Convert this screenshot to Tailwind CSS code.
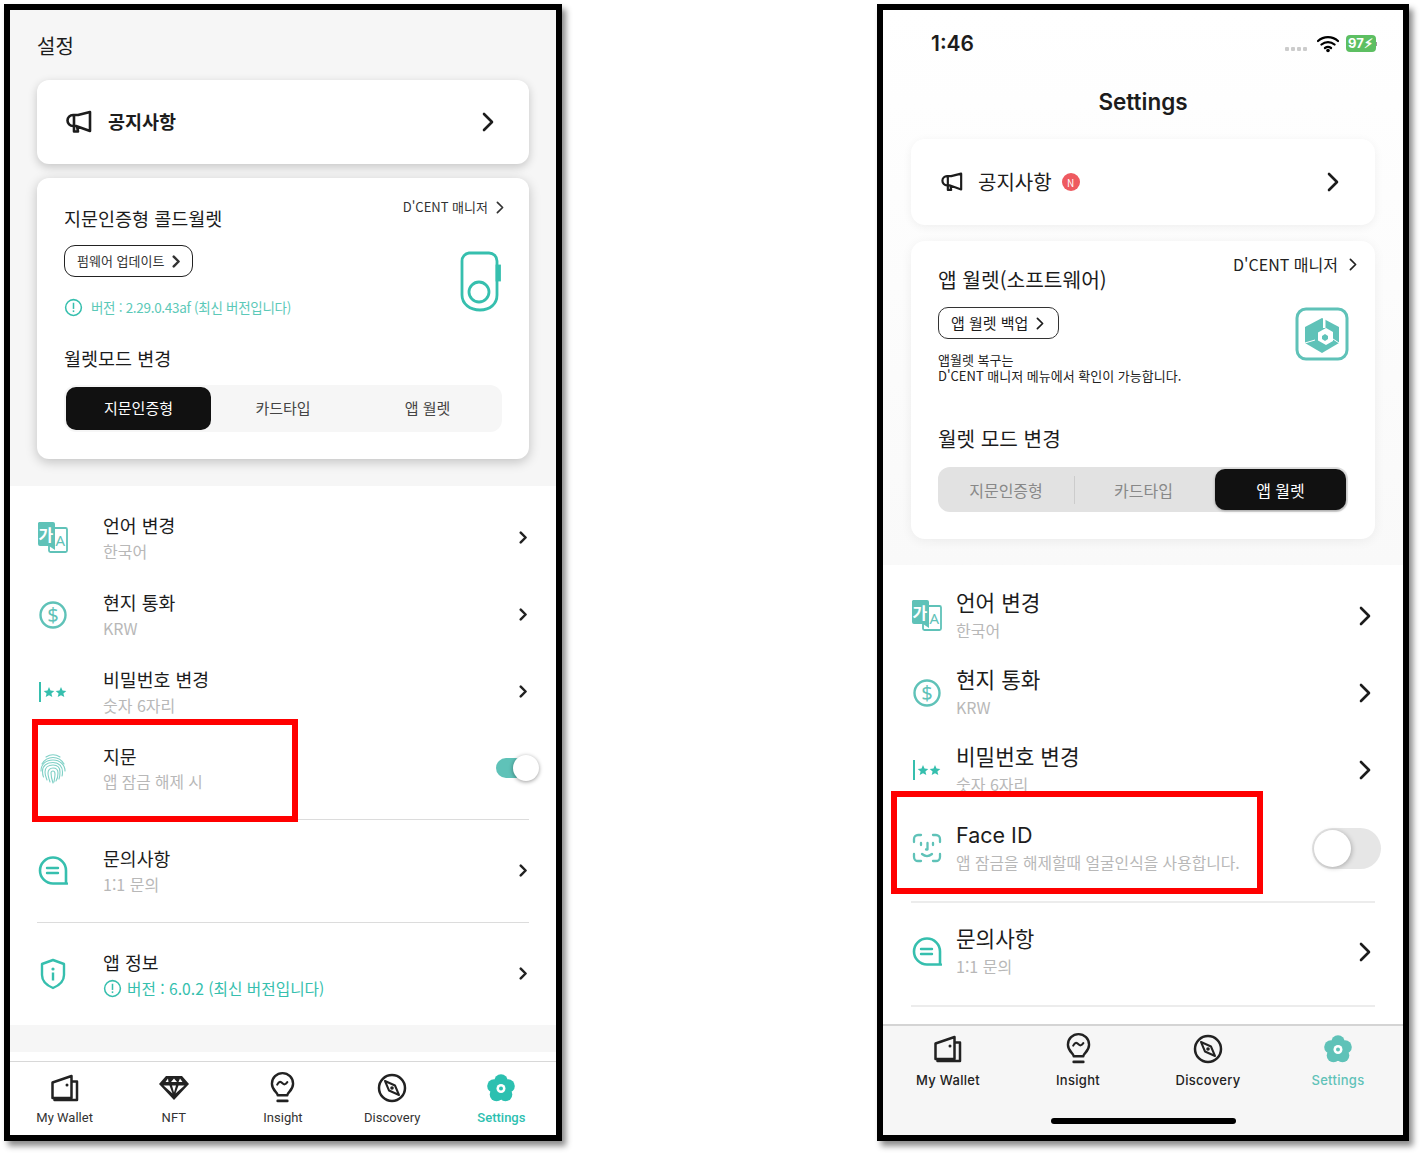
<!DOCTYPE html>
<html lang="ko">
<head>
<meta charset="UTF-8">
<title>D'CENT Settings</title>
<script src="https://cdn.jsdelivr.net/npm/@tailwindcss/browser@4"></script>
</head>
<body class="bg-white">
<svg class="hidden">
  <defs>
    <symbol id="chev" viewBox="0 0 12 20"><path d="M2 2l8 8-8 8" fill="none" stroke="currentColor" stroke-width="2.600" stroke-linecap="round" stroke-linejoin="round"/></symbol>
    <symbol id="chev-bold" viewBox="0 0 12 20"><path d="M2.500 2.500l7.500 7.500-7.500 7.500" fill="none" stroke="currentColor" stroke-width="3.800" stroke-linecap="round" stroke-linejoin="round"/></symbol>
    <symbol id="mega" viewBox="0 0 28 24"><path d="M25 2v19L11 16H8a5.500 5.500 0 0 1 0-11h5zM9 6v15.500h4l-1-5.500" fill="none" stroke="currentColor" stroke-width="2.600" stroke-linejoin="round"/></symbol>
    <symbol id="translate" viewBox="0 0 30 32">
      <rect x="11" y="6" width="18" height="24" rx="1.500" fill="#fff" stroke="#5fc2b8" stroke-width="1.800"/>
      <path d="M1 0h14a2 2 0 0 1 2 2v26l-6-4H2a2 2 0 0 1-2-2V1z" fill="#5fc2b8"/>
      <text x="0.500" y="19" font-size="16" font-weight="700" fill="#fff" font-family="Noto Sans CJK KR">가</text>
      <text x="17.500" y="24" font-size="15" fill="#5fc2b8" font-family="Noto Sans">A</text>
    </symbol>
    <symbol id="dollar" viewBox="0 0 30 30">
      <circle cx="15" cy="15" r="12.500" fill="none" stroke="#5fc2b8" stroke-width="2.400"/>
      <text x="15" y="22" font-size="20" text-anchor="middle" fill="#5fc2b8" font-family="Noto Sans">$</text>
    </symbol>
    <symbol id="stars" viewBox="0 0 30 20">
      <rect x="1" y="0" width="2" height="20" fill="#36bfae"/>
      <path d="M11 5l1.500 3.500 3.800.4-2.900 2.500.9 3.700-3.300-1.900-3.300 1.900.9-3.700-2.900-2.500 3.800-.4z" fill="#36bfae"/>
      <path d="M23 5l1.500 3.500 3.800.4-2.900 2.500.9 3.700-3.300-1.900-3.300 1.900.9-3.700-2.900-2.500 3.800-.4z" fill="#36bfae"/>
    </symbol>
    <symbol id="finger" viewBox="0 0 26 30">
      <g fill="none" stroke="#7fd0c6" stroke-width="1.100" stroke-linecap="round">
        <path d="M6 3a13 13 0 0 1 14 0"/>
        <path d="M2 10a12.500 12.500 0 0 1 22 0"/>
        <path d="M1 17c0-7 5-11 12-11s12 5 12 11"/>
        <path d="M3.500 23c-1-2-1-4-1-6 0-5 4-8.500 10.500-8.500S22.500 13 22.500 18c0 2 0 3-.5 4"/>
        <path d="M7 26c-1-3-2-5-2-8 0-4 3-7 8-7s7 3 7 7c0 3 0 5-1 7"/>
        <path d="M10 28c-1-3-2-6-2-9 0-3 2-5 5-5s5 2 5 5c0 3 0 5-2 8"/>
        <path d="M13 29c-1-3-2-6-2-10 0-1 1-2 2-2s2 1 2 3-.5 5-1 8"/>
      </g>
    </symbol>
    <symbol id="faceid" viewBox="0 0 30 30">
      <g fill="none" stroke="#5fc2b8" stroke-width="2.300" stroke-linecap="round" stroke-linejoin="round">
        <path d="M2 9V6a4 4 0 0 1 4-4h3M21 2h3a4 4 0 0 1 4 4v3M28 21v3a4 4 0 0 1-4 4h-3M9 28H6a4 4 0 0 1-4-4v-3"/>
        <path d="M9 10v2M21 10v2M15.500 10v6.500h-1.500M10 21c3 2.500 7 2.500 10 0"/>
      </g>
    </symbol>
    <symbol id="chat" viewBox="0 0 30 30">
      <path d="M29 27.500H15a13 13 0 1 1 13-13v13z" fill="none" stroke="#36bfae" stroke-width="2.600" stroke-linejoin="round"/>
      <path d="M9 12h11M9 17h11" stroke="#36bfae" stroke-width="2.400" stroke-linecap="round"/>
    </symbol>
    <symbol id="shield" viewBox="0 0 26 32">
      <path d="M13 2l11 4v11c0 6-5 10.500-11 13C7 27.500 2 23 2 17V6z" fill="none" stroke="#36bfae" stroke-width="2.400" stroke-linejoin="round"/>
      <circle cx="13" cy="11" r="1.600" fill="#36bfae"/><rect x="11.800" y="14.500" width="2.400" height="8" fill="#36bfae"/>
    </symbol>
    <symbol id="info" viewBox="0 0 20 20">
      <circle cx="10" cy="10" r="8.300" fill="none" stroke="currentColor" stroke-width="1.600"/>
      <rect x="9.200" y="5" width="1.600" height="6.500" fill="currentColor"/><rect x="9.200" y="13" width="1.600" height="1.800" fill="currentColor"/>
    </symbol>
    <symbol id="wallet" viewBox="0 0 30 30">
      <path d="M2.500 9.500L21.500 3v22H2.500zM21.500 8.500h5.500v18.500H4.500v-2" fill="none" stroke="#222" stroke-width="2.500" stroke-linejoin="round"/>
      <circle cx="17" cy="12" r="1.500" fill="#222"/>
    </symbol>
    <symbol id="gem" viewBox="0 0 32 28">
      <path d="M8 2h16l7 8-15 16L1 10z" fill="#222"/>
      <path d="M10 4.500l-2.500 3.500h3zM16 4.500l-3 3.500h6zM22 4.500l-1.500 3.500h4zM5.500 11.500h6l3 8zM26.500 11.500h-6l-3 8zM14 11.500h4l-2 7z" fill="#fff"/>
    </symbol>
    <symbol id="bulb" viewBox="0 0 26 34">
      <path d="M8 25c0-3-6-5-6-12a11 11 0 0 1 22 0c0 7-6 9-6 12z" fill="none" stroke="#222" stroke-width="2.500" stroke-linejoin="round"/>
      <path d="M8 31h10" stroke="#222" stroke-width="2.800" stroke-linecap="round"/>
      <path d="M7.500 14c2-4 4-3 5.500-1.500s3 2 5-1" fill="none" stroke="#222" stroke-width="2.200" stroke-linecap="round"/>
    </symbol>
    <symbol id="compass" viewBox="0 0 30 30">
      <circle cx="15" cy="15" r="13" fill="none" stroke="#222" stroke-width="2.500"/>
      <path d="M8 8l10 4.500 4 9.500-10-4.500z" fill="none" stroke="#222" stroke-width="2" stroke-linejoin="round"/>
      <circle cx="15" cy="15" r="1.800" fill="#222"/>
    </symbol>
    <symbol id="flower" viewBox="0 0 30 30">
      <g fill="currentColor">
        <circle cx="15" cy="8" r="6.800"/><circle cx="22" cy="13" r="6.800"/><circle cx="19.500" cy="21.500" r="6.800"/><circle cx="10.500" cy="21.500" r="6.800"/><circle cx="8" cy="13" r="6.800"/>
      </g>
      <circle cx="15" cy="15.500" r="4.500" fill="#fff"/><circle cx="15" cy="15.500" r="2" fill="currentColor"/>
    </symbol>
  </defs>
</svg>

<div class="relative flex items-start pl-[4px] pt-[4px] gap-[315px] h-[1154px] overflow-hidden font-['Noto_Sans_CJK_KR','Noto_Sans',sans-serif] text-[#1c1c1c]">

  <!-- left phone -->
  <div class="w-[558px] h-[1137px] border-[6px] border-black shadow-[4px_5px_6px_rgba(0,0,0,0.45)] flex flex-col bg-white shrink-0">
    <div class="bg-[#f6f6f6] h-[476px] shrink-0 px-[27px]">
      <div class="h-[70px] pt-[17px] text-[20px] leading-[38px]">설정</div>
      <div class="h-[84px] bg-white rounded-[12px] shadow-[0_3px_10px_rgba(0,0,0,0.2)] flex items-center pl-[28px] pr-[35px]">
        <svg class="w-[28px] h-[24px] text-[#1c1c1c]"><use href="#mega"/></svg>
        <span class="ml-[15px] text-[18.500px] font-bold flex-1 -mt-[1px]">공지사항</span>
        <svg class="w-[12px] h-[20px] text-[#1c1c1c]"><use href="#chev"/></svg>
      </div>
      <div class="mt-[14px] h-[281px] bg-white rounded-[12px] shadow-[0_3px_12px_rgba(0,0,0,0.22)] px-[27px] pt-[24px] relative">
        <div class="text-[18.500px] leading-[32px]">지문인증형 콜드월렛</div>
        <div class="absolute top-[19px] right-[25px] flex items-center text-[13px] leading-[20px] text-[#333]">D'CENT 매니저<svg class="ml-[8px] w-[8px] h-[13px]"><use href="#chev"/></svg></div>
        <div class="mt-[11px] w-[129px] h-[32px] border-[1.5px] border-[#222] rounded-[11px] flex items-center pl-[12px] text-[13px] text-[#333]">펌웨어 업데이트<svg class="ml-[8px] w-[8px] h-[13px]"><use href="#chev-bold"/></svg></div>
        <div class="mt-[19px] flex items-center text-[13.500px] leading-[22px] text-[#5cc9b8] tracking-[-0.3px]"><svg class="w-[19px] h-[19px] text-[#36bfae]"><use href="#info"/></svg><span class="ml-[8px]">버전 : 2.29.0.43af (최신 버전입니다)</span></div>
        <svg class="absolute left-[422px] top-[73px] w-[42px] h-[62px]" viewBox="0 0 42 62" fill="none" stroke="#36bfae" stroke-width="2.800">
          <path d="M10 2h20a8 8 0 0 1 8 8v34c0 9-7 15-17 15S3 53 3 44V10a8 8 0 0 1 7-8z"/>
          <circle cx="20" cy="41" r="10"/>
          <rect x="38" y="15" width="2.500" height="14" fill="#36bfae"/>
        </svg>
        <div class="mt-[24px] text-[18.500px] leading-[32px]">월렛모드 변경</div>
        <div class="mt-[11px] w-[438px] h-[47px] bg-[#f6f6f6] rounded-[12px] flex items-center px-[2px] text-[15px] text-[#444]">
          <div class="w-[145px] h-[43px] -mt-[1px] bg-[#111] text-white rounded-[10px] flex items-center justify-center">지문인증형</div>
          <div class="w-[144px] text-center">카드타입</div>
          <div class="w-[145px] text-center">앱 월렛</div>
        </div>
      </div>
    </div>

    <div class="flex-1 flex flex-col pt-[13px] pl-[28px] pr-[29px]">
      <div class="h-[77px] flex items-center">
        <svg class="w-[30px] h-[32px]"><use href="#translate"/></svg>
        <div class="ml-[35px] flex-1"><div class="text-[18.300px] leading-[26px]">언어 변경</div><div class="text-[16px] leading-[26px] text-[#b8b8b8]">한국어</div></div>
        <svg class="w-[8px] h-[13px] text-[#222]"><use href="#chev-bold"/></svg>
      </div>
      <div class="h-[77px] flex items-center">
        <svg class="w-[30px] h-[30px]"><use href="#dollar"/></svg>
        <div class="ml-[35px] flex-1"><div class="text-[18.300px] leading-[26px]">현지 통화</div><div class="text-[16px] leading-[26px] text-[#b8b8b8]">KRW</div></div>
        <svg class="w-[8px] h-[13px] text-[#222]"><use href="#chev-bold"/></svg>
      </div>
      <div class="h-[77px] flex items-center">
        <svg class="w-[30px] h-[20px]"><use href="#stars"/></svg>
        <div class="ml-[35px] flex-1"><div class="text-[18.300px] leading-[26px]">비밀번호 변경</div><div class="text-[16px] leading-[26px] text-[#b8b8b8]">숫자 6자리</div></div>
        <svg class="w-[8px] h-[13px] text-[#222]"><use href="#chev-bold"/></svg>
      </div>
      <div class="h-[77px] flex items-center">
        <svg class="ml-[2px] mr-[2px] w-[26px] h-[30px]"><use href="#finger"/></svg>
        <div class="ml-[35px] flex-1"><div class="text-[18.300px] leading-[26px]">지문</div><div class="text-[15.700px] leading-[25px] text-[#b8b8b8]">앱 잠금 해제 시</div></div>
        <div class="relative w-[30px] h-[20px] mr-px -mt-[1px] bg-[#5fc2b8] rounded-full">
          <div class="absolute -right-[13px] -top-[3px] w-[26px] h-[26px] bg-white rounded-full shadow-[0_1px_4px_rgba(0,0,0,0.4)]"></div>
        </div>
      </div>
      <div class="mt-[12px] h-px bg-[#dcdcdc] -ml-px -mr-[2px]"></div>
      <div class="h-[77px] mt-[12px] flex items-center">
        <svg class="w-[30px] h-[30px]"><use href="#chat"/></svg>
        <div class="ml-[35px] flex-1 mt-[1px]"><div class="text-[18.300px] leading-[26px]">문의사항</div><div class="text-[16px] leading-[26px] text-[#b8b8b8]">1:1 문의</div></div>
        <svg class="w-[8px] h-[13px] text-[#222]"><use href="#chev-bold"/></svg>
      </div>
      <div class="mt-[13px] h-px bg-[#dcdcdc] -ml-px -mr-[2px]"></div>
      <div class="h-[77px] mt-[12px] flex items-center">
        <svg class="ml-[2px] mr-[2px] w-[26px] h-[32px]"><use href="#shield"/></svg>
        <div class="ml-[35px] flex-1 mt-[3px]"><div class="text-[18.300px] leading-[26px]">앱 정보</div><div class="flex items-center text-[15.700px] leading-[27px] text-[#36bfae]"><svg class="w-[19px] h-[19px] mr-[5px]"><use href="#info"/></svg>버전 : 6.0.2 (최신 버전입니다)</div></div>
        <svg class="w-[8px] h-[13px] text-[#222]"><use href="#chev-bold"/></svg>
      </div>
    </div>

    <div class="h-[27px] bg-[#f6f6f6] shrink-0"></div>
    <div class="h-[9px] shrink-0"></div>
    <div class="h-[74px] shrink-0 border-t border-[#d8d8d8] grid grid-cols-5 font-['Roboto',sans-serif] text-[13px] text-[#333] text-center">
      <div class="flex flex-col items-center pt-[11px]"><svg class="w-[30px] h-[30px]"><use href="#wallet"/></svg><div class="mt-[6px] leading-[18px]">My Wallet</div></div>
      <div class="flex flex-col items-center pt-[11px]"><svg class="w-[32px] h-[30px]"><use href="#gem"/></svg><div class="mt-[6px] leading-[18px]">NFT</div></div>
      <div class="flex flex-col items-center pt-[9px]"><svg class="w-[25px] h-[33px]"><use href="#bulb"/></svg><div class="mt-[5px] leading-[18px]">Insight</div></div>
      <div class="flex flex-col items-center pt-[11px]"><svg class="w-[30px] h-[30px]"><use href="#compass"/></svg><div class="mt-[6px] leading-[18px]">Discovery</div></div>
      <div class="flex flex-col items-center pt-[11px] text-[#2cc0b0] font-medium"><svg class="w-[30px] h-[30px]"><use href="#flower"/></svg><div class="mt-[6px] leading-[18px]">Settings</div></div>
    </div>
  </div>

  <!-- right phone -->
  <div class="w-[532px] h-[1137px] border-[6px] border-black shadow-[4px_5px_6px_rgba(0,0,0,0.45)] flex flex-col bg-white shrink-0">
    <div class="h-[555px] shrink-0 bg-linear-to-b from-white to-[#f9f9f9] px-[28px]">
      <div class="h-[56px] flex items-center font-['Inter',sans-serif] pt-[11px]">
        <span class="ml-[20px] text-[21px] font-semibold flex-1">1:46</span>
        <div class="flex gap-[2px] mt-[10px] mr-[10px]"><i class="w-[4px] h-[4px] bg-[#ccc] rounded-[1px]"></i><i class="w-[4px] h-[4px] bg-[#ccc] rounded-[1px]"></i><i class="w-[4px] h-[4px] bg-[#ccc] rounded-[1px]"></i><i class="w-[4px] h-[4px] bg-[#ccc] rounded-[1px]"></i></div>
        <svg class="w-[22px] h-[18px]" viewBox="0 0 22 18"><path d="M1 6a15 15 0 0 1 20 0M4.500 9.500a10 10 0 0 1 13 0M8 13a5 5 0 0 1 6 0" fill="none" stroke="#000" stroke-width="2.300" stroke-linecap="round"/><circle cx="11" cy="15.500" r="1.800" fill="#000"/></svg>
        <div class="ml-[7px] -mr-[2px] w-[30px] h-[17px] rounded-[4px] bg-[#5dbf62] text-white text-[13px] font-bold leading-[17px] pl-[2px]">97⚡︎</div>
        <div class="ml-[2px] -mr-[2px] w-[1px] h-[4px] bg-[#999]"></div>
      </div>
      <div class="h-[64px] text-center font-['Inter',sans-serif] text-[22.500px] font-semibold leading-[72px]">Settings</div>
      <div class="mt-[9px] h-[86px] bg-white rounded-[14px] shadow-[0_2px_10px_rgba(0,0,0,0.06)] flex items-center pl-[29px] pr-[36px]">
        <svg class="w-[24px] h-[20px] text-[#1c1c1c]"><use href="#mega"/></svg>
        <span class="ml-[14px] text-[20px]">공지사항</span>
        <span class="ml-[10px] w-[18px] h-[18px] rounded-full bg-[#ee5a60] text-white text-[10px] flex items-center justify-center">N</span>
        <span class="flex-1"></span>
        <svg class="w-[12px] h-[20px] text-[#1c1c1c]"><use href="#chev"/></svg>
      </div>
      <div class="mt-[16px] h-[298px] bg-white rounded-[14px] shadow-[0_2px_12px_rgba(0,0,0,0.06)] px-[27px] pt-[21px] relative">
        <div class="text-[20.300px] leading-[34px]">앱 월렛(소프트웨어)</div>
        <div class="absolute top-[12px] right-[18px] flex items-center text-[16px] leading-[22px] text-[#222]">D'CENT 매니저<svg class="ml-[11px] w-[8px] h-[13px]"><use href="#chev"/></svg></div>
        <div class="mt-[11px] w-[121px] h-[32px] border-[1.5px] border-[#333] rounded-[10px] flex items-center pl-[12px] text-[15px]">앱 월렛 백업<svg class="ml-[8px] w-[8px] h-[13px]"><use href="#chev"/></svg></div>
        <div class="mt-[13px] text-[13px] leading-[16px] text-[#222]">앱월렛 복구는<br>D'CENT 매니저 메뉴에서 확인이 가능합니다.</div>
        <svg class="absolute left-[384px] top-[66px] w-[54px] h-[54px]" viewBox="0 0 54 54">
          <rect x="2" y="2" width="50" height="50" rx="9" fill="none" stroke="#5fc2b8" stroke-width="3"/>
          <path d="M27 11l17 9v16l-17 10-17-10V20z" fill="#5fc2b8"/>
          <path d="M28 9h2.500v12H28zM31 21l7 4v9l-7 4-8-4.500v-8z" fill="#fff"/>
          <path d="M30 27l3 2v3l-3 2-3-2v-3z" fill="#5fc2b8"/>
          <path d="M10 36l10-3M44 36l-6-4" stroke="#fff" stroke-width="1"/>
        </svg>
        <div class="mt-[38px] text-[20.200px] leading-[34px]">월렛 모드 변경</div>
        <div class="mt-[11px] relative w-[410px] h-[45px] bg-[#e2e2e2] rounded-[12px] flex items-center text-[16px] text-[#888]">
          <div class="w-[136px] text-center">지문인증형</div>
          <div class="w-px h-[28px] bg-[#ccc]"></div>
          <div class="w-[137px] text-center">카드타입</div>
          <div class="absolute right-[2px] top-[2px] w-[131px] h-[41px] bg-[#111] text-white rounded-[10px] shadow-[0_1px_3px_rgba(0,0,0,0.3)] flex items-center justify-center">앱 월렛</div>
        </div>
      </div>
    </div>

    <div class="h-[459px] shrink-0 pl-[29px] pr-[32px] pt-[12px]">
      <div class="h-[77px] flex items-center">
        <svg class="w-[30px] h-[32px]"><use href="#translate"/></svg>
        <div class="ml-[14px] flex-1 -mt-[2px]"><div class="text-[21.300px] leading-[30px]">언어 변경</div><div class="text-[16px] leading-[26px] text-[#b8b8b8]">한국어</div></div>
        <svg class="w-[12px] h-[20px] text-[#1c1c1c]"><use href="#chev"/></svg>
      </div>
      <div class="h-[77px] flex items-center">
        <svg class="w-[30px] h-[30px]"><use href="#dollar"/></svg>
        <div class="ml-[14px] flex-1 -mt-[2px]"><div class="text-[21.300px] leading-[30px]">현지 통화</div><div class="text-[16px] leading-[26px] text-[#b8b8b8]">KRW</div></div>
        <svg class="w-[12px] h-[20px] text-[#1c1c1c]"><use href="#chev"/></svg>
      </div>
      <div class="h-[77px] flex items-center">
        <svg class="w-[30px] h-[20px]"><use href="#stars"/></svg>
        <div class="ml-[14px] flex-1 -mt-[2px]"><div class="text-[21.300px] leading-[30px]">비밀번호 변경</div><div class="text-[16px] leading-[26px] text-[#b8b8b8]">숫자 6자리</div></div>
        <svg class="w-[12px] h-[20px] text-[#1c1c1c]"><use href="#chev"/></svg>
      </div>
      <div class="h-[80px] flex items-center">
        <svg class="w-[30px] h-[30px]"><use href="#faceid"/></svg>
        <div class="ml-[14px] flex-1 -mt-[1px]"><div class="font-['Inter',sans-serif] text-[21.500px] leading-[30px]">Face ID</div><div class="text-[15.800px] leading-[26px] text-[#b8b8b8]">앱 잠금을 해제할때 얼굴인식을 사용합니다.</div></div>
        <div class="relative w-[69px] h-[41px] -mr-[10px] bg-[#e6e6e6] rounded-full">
          <div class="absolute left-[2px] top-[2px] w-[37px] h-[37px] bg-white rounded-full shadow-[1px_1px_5px_rgba(0,0,0,0.25)]"></div>
        </div>
      </div>
      <div class="mt-[13px] h-[2px] bg-[#ececec] -ml-px -mr-[4px]"></div>
      <div class="h-[98px] mb-[4px] flex items-center">
        <svg class="w-[30px] h-[30px]"><use href="#chat"/></svg>
        <div class="ml-[14px] flex-1 -mt-[2px]"><div class="text-[21.300px] leading-[30px]">문의사항</div><div class="text-[16px] leading-[26px] text-[#b8b8b8]">1:1 문의</div></div>
        <svg class="w-[12px] h-[20px] text-[#1c1c1c]"><use href="#chev"/></svg>
      </div>
      <div class="h-[2px] bg-[#ececec] -ml-px -mr-[4px]"></div>
    </div>

    <div class="flex-1 bg-[#f6f6f6] border-t-2 border-[#d4d4d4] relative grid grid-cols-4 font-['Inter',sans-serif] text-[13px] font-medium text-[#222] text-center tracking-[0.3px]">
      <div class="flex flex-col items-center pt-[8px]"><svg class="w-[30px] h-[30px]"><use href="#wallet"/></svg><div class="mt-[7px] leading-[18px]">My Wallet</div></div>
      <div class="flex flex-col items-center pt-[6px]"><svg class="w-[25px] h-[33px]"><use href="#bulb"/></svg><div class="mt-[6px] leading-[18px]">Insight</div></div>
      <div class="flex flex-col items-center pt-[8px]"><svg class="w-[30px] h-[30px]"><use href="#compass"/></svg><div class="mt-[7px] leading-[18px]">Discovery</div></div>
      <div class="flex flex-col items-center pt-[8px] text-[#5fc2b8]"><svg class="w-[30px] h-[30px]"><use href="#flower"/></svg><div class="mt-[7px] leading-[18px]">Settings</div></div>
      <div class="absolute left-[168px] bottom-[11px] w-[185px] h-[6px] bg-black rounded-full"></div>
    </div>
  </div>

  <!-- red callouts drawn over the screenshots -->
  <div class="absolute left-[32px] top-[719px] w-[266px] h-[103px] border-[6px] border-[#ff0000]"></div>
  <div class="absolute left-[891px] top-[791px] w-[372px] h-[103px] border-[6px] border-[#ff0000]"></div>
</div>
</body>
</html>
